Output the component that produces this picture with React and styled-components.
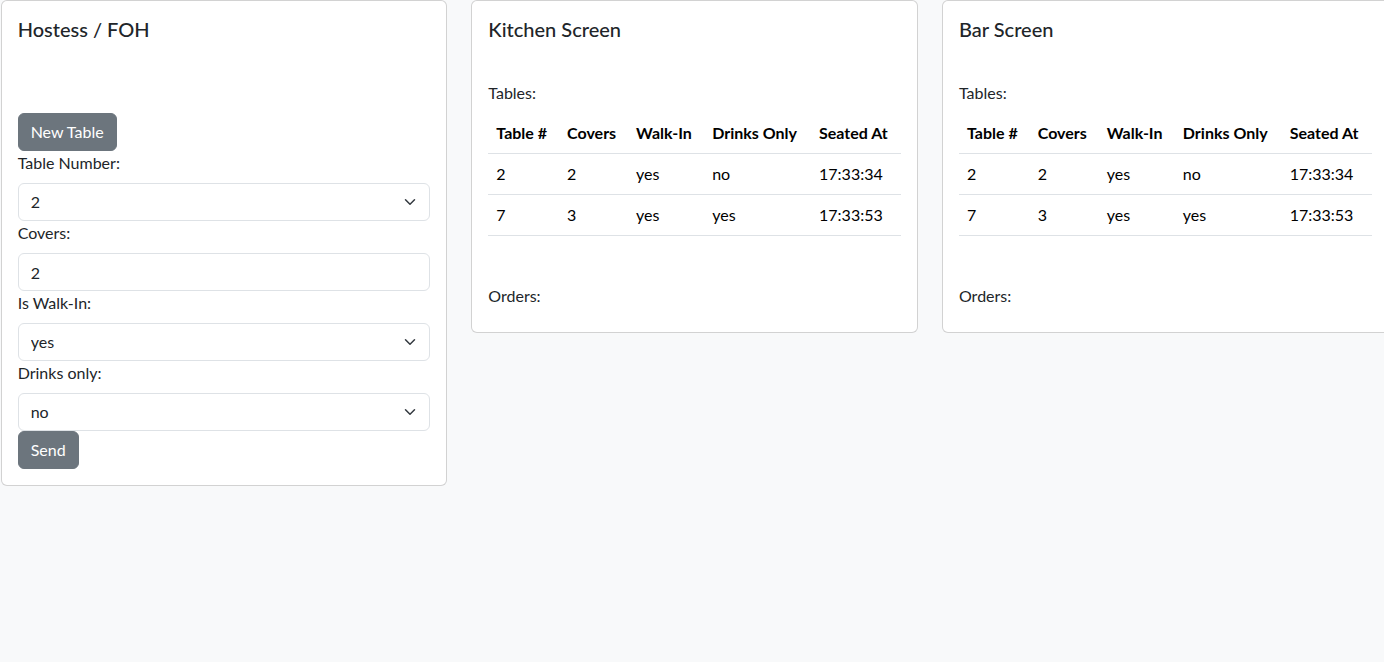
import React from "react";
import styled, { createGlobalStyle } from "styled-components";

const GlobalStyle = createGlobalStyle`
    *, *::before, *::after {
        box-sizing: border-box;
    }

    html, body {
        margin: 0;
        padding: 0;
        background-color: #f8f9fa;
        overflow: hidden;
    }

    body {
        font-family: Lato, "Noto Sans", sans-serif;
        font-size: 16px;
        line-height: 1.5;
        color: #212529;
    }
`

const tables = [
    { id: 2, covers: 2, walkIn: "yes", drinksOnly: "no", seatedAt: "17:33:34" },
    { id: 7, covers: 3, walkIn: "yes", drinksOnly: "yes", seatedAt: "17:33:53" },
]

function Chevron() {
    return (
        <svg width="16" height="12" viewBox="0 0 16 16" fill="none">
            <path d="m2 5 6 6 6-6" stroke="#343a40" strokeWidth="2" strokeLinecap="round" strokeLinejoin="round" />
        </svg>
    )
}

function SelectField({ value, options }) {
    return (
        <SelectWrap>
            <Select defaultValue={value}>
                {options.map(opt => (
                    <option key={opt} value={opt}>{opt}</option>
                ))}
            </Select>
            <ChevronBox><Chevron /></ChevronBox>
        </SelectWrap>
    )
}

function TablesTable() {
    return (
        <Table>
            <thead>
                <tr>
                    <Th>Table #</Th>
                    <Th>Covers</Th>
                    <Th>Walk-In</Th>
                    <Th>Drinks Only</Th>
                    <Th>Seated At</Th>
                </tr>
            </thead>
            <tbody>
                {tables.map(row => (
                    <tr key={row.id}>
                        <Td>{row.id}</Td>
                        <Td>{row.covers}</Td>
                        <Td>{row.walkIn}</Td>
                        <Td>{row.drinksOnly}</Td>
                        <Td>{row.seatedAt}</Td>
                    </tr>
                ))}
            </tbody>
        </Table>
    )
}

function ScreenCard({ title }) {
    return (
        <Card>
            <CardBody>
                <CardTitle>{title}</CardTitle>
                <Spacer $h={32} />
                <Label>Tables:</Label>
                <TablesTable />
                <Spacer $h={32} />
                <Label>Orders:</Label>
            </CardBody>
        </Card>
    )
}

export default function App() {
    return (
        <>
            <GlobalStyle />
            <Row>
                <Card>
                    <CardBody>
                        <CardTitle>Hostess / FOH</CardTitle>
                        <Spacer $h={64} />
                        <Button>New Table</Button>
                        <Form>
                            <Label>Table Number:</Label>
                            <SelectField value="2" options={["1", "2", "3", "4", "5", "6", "7", "8"]} />
                            <Label>Covers:</Label>
                            <Input type="text" defaultValue="2" />
                            <Label>Is Walk-In:</Label>
                            <SelectField value="yes" options={["yes", "no"]} />
                            <Label>Drinks only:</Label>
                            <SelectField value="no" options={["yes", "no"]} />
                            <Button type="button">Send</Button>
                        </Form>
                    </CardBody>
                </Card>
                <ScreenCard title="Kitchen Screen" />
                <ScreenCard title="Bar Screen" />
            </Row>
        </>
    )
}

const Row = styled.div`
    display: flex;
    align-items: flex-start;
    gap: 24px;
    padding-left: 0.67px;
    width: 1420px;
`

const Card = styled.div`
    flex: 0 0 446.67px;
    width: 446.67px;
    background-color: #fff;
    border: 1px solid rgba(0, 0, 0, 0.175);
    border-radius: 6px;
`

const CardBody = styled.div`
    padding: 16px;
`

const CardTitle = styled.h5`
    margin: 0 0 8px;
    height: 24px;
    font-size: 20px;
    font-weight: 500;
    line-height: 1.2;
    color: #212529;
`

const Spacer = styled.div`
    height: ${p => p.$h}px;
`

const Form = styled.form`
    display: flex;
    flex-direction: column;
    align-items: flex-start;
`

const Label = styled.label`
    display: inline-block;
    margin-bottom: 8px;
`

const Button = styled.button`
    display: inline-block;
    padding: 6px 12px;
    font-family: inherit;
    font-size: 16px;
    line-height: 1.5;
    color: #fff;
    background-color: #6c757d;
    border: 1px solid #6c757d;
    border-radius: 6px;
    cursor: pointer;
`

const SelectWrap = styled.div`
    position: relative;
    width: 100%;
`

const Select = styled.select`
    display: block;
    width: 100%;
    height: 38px;
    padding: 6px 36px 6px 12px;
    font-family: inherit;
    font-size: 16px;
    line-height: 1.5;
    color: #212529;
    background-color: #fff;
    border: 1px solid #dee2e6;
    border-radius: 6px;
    appearance: none;
    -webkit-appearance: none;
    outline: none;
`

const ChevronBox = styled.span`
    position: absolute;
    right: 12px;
    top: 50%;
    transform: translateY(-50%);
    display: flex;
    pointer-events: none;
`

const Input = styled.input`
    display: block;
    width: 100%;
    height: 38px;
    padding: 6px 12px;
    font-family: inherit;
    font-size: 16px;
    line-height: 1.5;
    color: #212529;
    background-color: #fff;
    border: 1px solid #dee2e6;
    border-radius: 6px;
    outline: none;
`

const Table = styled.table`
    width: 100%;
    margin-bottom: 16px;
    border-collapse: collapse;
    color: #000;
`

const Th = styled.th`
    padding: 8px;
    text-align: left;
    font-weight: bold;
    white-space: nowrap;
    border-bottom: 1px solid #dee2e6;
`

const Td = styled.td`
    padding: 8px;
    border-bottom: 1px solid #dee2e6;
`
